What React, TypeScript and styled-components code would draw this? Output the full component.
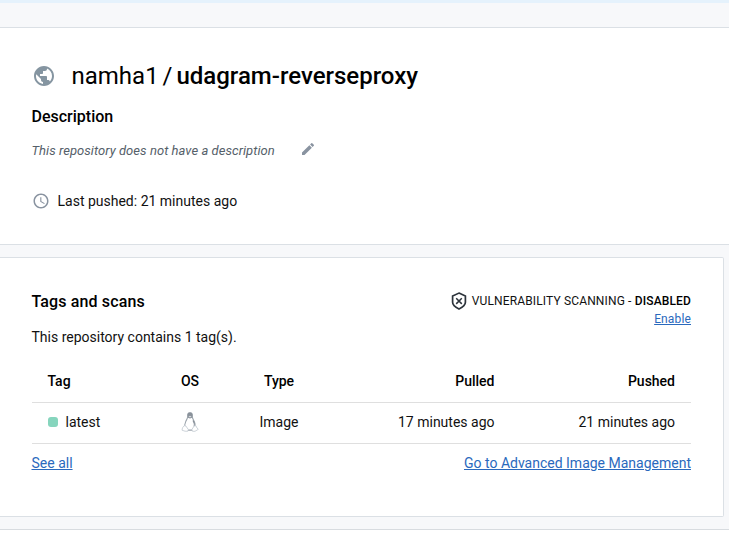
import React from 'react';
import styled, { createGlobalStyle } from 'styled-components';

const GlobalStyle = createGlobalStyle`
  * { box-sizing: border-box; }
  body {
    margin: 0;
    background: #fff;
    color: #111;
    font: 400 14px/20px Roboto, sans-serif;
    overflow: hidden;
  }
  h1, h2, p { margin: 0; }
  svg { display: block; flex: none; }
`;

const Page = styled.div`
  height: 530px;
  background: #f7f8fa;
  border-bottom: 1px solid #d8dce0;
`;

const TopStrip = styled.div`
  height: 3px;
  background: #e5f2fc;
`;

const Header = styled.header`
  height: 218px;
  margin-top: 24px;
  padding: 32px 31.5px 0;
  background: #fff;
  border: solid #dbe0e5;
  border-width: 1px 0;
`;

const TitleRow = styled.div`
  display: flex;
  align-items: center;
  height: 32px;
  gap: 16px;
`;

const Title = styled.h1`
  color: #000;
  font-size: 24px;
  line-height: 32px;
  font-weight: 400;
  word-spacing: -2px;
  white-space: nowrap;
  strong { font-weight: 500; }
`;

const Heading = styled.h2<{ $top?: number; $spacing?: number }>`
  margin-top: ${({ $top = 0 }) => $top}px;
  color: #000;
  font-size: 16px;
  line-height: 24px;
  font-weight: 500;
  letter-spacing: ${({ $spacing = 0 }) => $spacing}px;
`;

const DescriptionRow = styled.div`
  display: flex;
  align-items: center;
  gap: 25px;
  height: 20px;
  margin-top: 12px;
  color: #556069;
  font-size: 13px;
  font-style: italic;
  letter-spacing: 0.05px;
  svg { margin-bottom: 4px; }
`;

const PushedRow = styled.div`
  display: flex;
  align-items: center;
  gap: 8px;
  height: 20px;
  margin-top: 30px;
`;

const Card = styled.section`
  width: 724px;
  height: 260px;
  margin-top: 12px;
  padding: 32px 32px 0 31.5px;
  background: #fff;
  border: solid #dbe0e5;
  border-width: 1px 1px 1px 0;
  border-radius: 0 2px 2px 0;
`;

const CardTop = styled.div`
  display: flex;
  justify-content: space-between;
  height: 58px;
`;

const Summary = styled.p`
  margin-top: 13px;
`;

const Scanning = styled.div`
  display: flex;
  flex-direction: column;
  align-items: flex-end;
  padding-top: 2px;
  font-size: 12px;
  line-height: 18px;
  letter-spacing: 0.145px;
`;

const ScanStatus = styled.div`
  display: flex;
  align-items: center;
  gap: 4px;
  white-space: nowrap;
  span { padding-top: 1px; line-height: 17px; }
  strong {
    color: #000;
    font-weight: 500;
  }
`;

const Link = styled.a`
  color: #2a69bd;
  text-decoration: underline;
`;

const Table = styled.table`
  width: 659.5px;
  margin-top: 13px;
  border-collapse: collapse;
  table-layout: fixed;
`;

const Row = styled.tr`
  height: 41px;
  border-bottom: 1px solid #dfdfdf;
`;

const Cell = styled.td<{ $align?: 'left' | 'center' | 'right' }>`
  padding: 0 16px 2px;
  text-align: ${({ $align = 'left' }) => $align};
  white-space: nowrap;
  svg { margin: 0 auto; }
`;

const HeadCell = styled(Cell).attrs({ as: 'th' })`
  padding-bottom: 0;
  color: #000;
  font-weight: 500;
`;

const TagName = styled.div`
  display: flex;
  align-items: center;
  gap: 8px;
`;

const Dot = styled.span`
  width: 10px;
  height: 10px;
  border-radius: 3px;
  background: #86d5bd;
`;

const Links = styled.div`
  display: flex;
  justify-content: space-between;
  margin-top: 9px;
`;

const Globe = () => (
  <svg width="24" height="24" viewBox="0 0 24 24" fill="#8595a1">
    <path d="M12 2C6.48 2 2 6.48 2 12s4.48 10 10 10 10-4.48 10-10S17.52 2 12 2zm-1 17.93c-3.95-.49-7-3.85-7-7.93 0-.62.08-1.21.21-1.79L9 15v1c0 1.1.9 2 2 2v1.93zm6.9-2.54c-.26-.81-1-1.39-1.9-1.39h-1v-3c0-.55-.45-1-1-1H8v-2h2c.55 0 1-.45 1-1V7h2c1.1 0 2-.9 2-2v-.41c2.93 1.19 5 4.06 5 7.41 0 2.08-.8 3.97-2.1 5.39z" />
  </svg>
);

const Pencil = () => (
  <svg width="16" height="16" viewBox="0 0 24 24" fill="#8993a0">
    <path d="M3 17.25V21h3.75L17.81 9.94l-3.75-3.75L3 17.25zM20.71 7.04a1 1 0 0 0 0-1.41l-2.34-2.34a1 1 0 0 0-1.41 0l-1.83 1.83 3.75 3.75 1.83-1.83z" />
  </svg>
);

const Clock = () => (
  <svg width="18" height="18" viewBox="0 0 24 24" fill="#8993a0">
    <path d="M11.99 2C6.47 2 2 6.48 2 12s4.47 10 9.99 10C17.52 22 22 17.52 22 12S17.52 2 11.99 2zM12 20c-4.42 0-8-3.58-8-8s3.58-8 8-8 8 3.58 8 8-3.58 8-8 8zm.5-13H11v6l5.25 3.15.75-1.23-4.5-2.67V7z" />
  </svg>
);

const Shield = () => (
  <svg width="18" height="18" viewBox="0 0 18 18" fill="none" stroke="#2c333b" strokeWidth="1.7">
    <path d="M9 1.1 15.400 4V10.200C15.400 13.500 12.500 15.300 9 17 5.500 15.300 2.600 13.500 2.600 10.200V4Z" />
    <path d="m6.200 6.300 5.600 5.600m0-5.600-5.600 5.600" strokeWidth="1.5" />
  </svg>
);

const Penguin = () => (
  <svg width="18" height="20" viewBox="0 0 18 20">
    <path
      d="M9 .8C6.900.8 6.500 2.200 6.700 4.200 6.800 6.400 5.600 7.500 4.700 9.600c-.9 2-1.300 3.800-.6 5.700l2.700 2.800h4.400l2.700-2.800c.7-1.900.3-3.800-.6-5.700-.9-2-2.100-3.200-2-5.400C11.500 2.200 11.100.8 9 .8Z"
      fill="#fff"
      stroke="#9da5ad"
      strokeWidth="1.1"
    />
    <path d="M9 .6C6.700.6 6.400 2.200 6.600 4.100L7 5.700l2 .8 2-.8.4-1.600C11.600 2.200 11.300.6 9 .6Z" fill="#89919a" />
    <path d="M7.400 4.500 9 3.700l1.600.8L9 5.600Z" fill="#d5d9dd" />
    <path d="M12 8.400c1.300 2 1.700 4.100 1.200 6.200" fill="none" stroke="#89919a" strokeWidth="1.2" />
    <path d="m3.100 13.700 1.800.3 2.400 3.500-.6 1.800-2.700-.1-3-1 .5-2.400Zm11.800 0-1.800.3-2.200 3.500.6 1.800h2.500l3.300-2-1.300-1.300Z" fill="#fff" stroke="#c2c9d0" strokeWidth=".8" strokeLinejoin="round" />
  </svg>
);

export default function App() {
  return (
    <>
      <GlobalStyle />
      <Page>
        <TopStrip />
        <Header>
          <TitleRow>
            <Globe />
            <Title>namha1 / <strong>udagram-reverseproxy</strong></Title>
          </TitleRow>
          <Heading $top={13}>Description</Heading>
          <DescriptionRow>
            This repository does not have a description
            <Pencil />
          </DescriptionRow>
          <PushedRow>
            <Clock />
            Last pushed: 21 minutes ago
          </PushedRow>
        </Header>
        <Card>
          <CardTop>
            <div>
              <Heading $spacing={0.13}>Tags and scans</Heading>
              <Summary>This repository contains 1 tag(s).</Summary>
            </div>
            <Scanning>
              <ScanStatus>
                <Shield />
                <span>VULNERABILITY SCANNING - <strong>DISABLED</strong></span>
              </ScanStatus>
              <Link>Enable</Link>
            </Scanning>
          </CardTop>
          <Table>
            <colgroup>
              <col width="114" />
              <col width="89" />
              <col width="89" />
              <col width="187" />
              <col />
            </colgroup>
            <thead>
              <Row>
                <HeadCell>Tag</HeadCell>
                <HeadCell $align="center">OS</HeadCell>
                <HeadCell $align="center">Type</HeadCell>
                <HeadCell $align="right">Pulled</HeadCell>
                <HeadCell $align="right">Pushed</HeadCell>
              </Row>
            </thead>
            <tbody>
              <Row>
                <Cell><TagName><Dot />latest</TagName></Cell>
                <Cell $align="center"><Penguin /></Cell>
                <Cell $align="center">Image</Cell>
                <Cell $align="right">17 minutes ago</Cell>
                <Cell $align="right">21 minutes ago</Cell>
              </Row>
            </tbody>
          </Table>
          <Links>
            <Link>See all</Link>
            <Link>Go to Advanced Image Management</Link>
          </Links>
        </Card>
      </Page>
    </>
  );
}
